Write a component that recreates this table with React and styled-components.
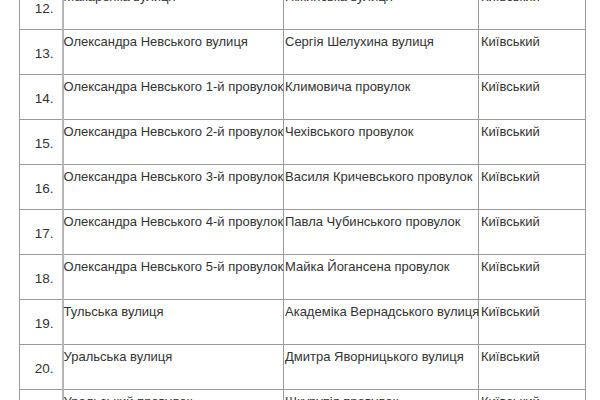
import styled, { createGlobalStyle } from 'styled-components'

const GlobalStyle = createGlobalStyle`
  html, body {
    margin: 0;
    padding: 0;
    background: #fff;
    overflow: hidden;
  }
`

const Page = styled.div`
  width: 600px;
  height: 400px;
  overflow: hidden;
  background: #fff;
`

const Scroller = styled.div`
  margin-top: -16px;
  padding-left: 19px;
`

const Table = styled.table`
  border-collapse: collapse;
  table-layout: fixed;
  width: 566px;
  font-family: "Liberation Sans", Arial, sans-serif;
  font-size: 13px;
  color: #333;
`

const Row = styled.tr`
  height: 45px;
`

const NumCell = styled.td`
  border: 1px solid #9a9a9a;
  border-right: 2px solid #b5b5b5;
  text-align: right;
  vertical-align: middle;
  padding: 3px 8px 0 0;
  box-sizing: border-box;
  font-size: 13.5px;
`

const Cell = styled.td`
  border: 1px solid #9a9a9a;
  vertical-align: top;
  padding: 4px 0 0 ${p => p.$pl}px;
  box-sizing: border-box;
  white-space: nowrap;
  line-height: 16px;
`

const rows = [
  ['12.', 'Макаренка вулиця', 'Ніжинська вулиця', 'Київський'],
  ['13.', 'Олександра Невського вулиця', 'Сергія Шелухина вулиця', 'Київський'],
  ['14.', 'Олександра Невського 1-й провулок', 'Климовича провулок', 'Київський'],
  ['15.', 'Олександра Невського 2-й провулок', 'Чехівського провулок', 'Київський'],
  ['16.', 'Олександра Невського 3-й провулок', 'Василя Кричевського провулок', 'Київський'],
  ['17.', 'Олександра Невського 4-й провулок', 'Павла Чубинського провулок', 'Київський'],
  ['18.', 'Олександра Невського 5-й провулок', 'Майка Йогансена провулок', 'Київський'],
  ['19.', 'Тульська вулиця', 'Академіка Вернадського вулиця', 'Київський'],
  ['20.', 'Уральська вулиця', 'Дмитра Яворницького вулиця', 'Київський'],
  ['21.', 'Уральський провулок', 'Шкурупія провулок', 'Київський'],
]

export default function App() {
  return (
    <Page>
      <GlobalStyle />
      <Scroller>
        <Table>
          <colgroup>
            <col style={{ width: 43 }} />
            <col style={{ width: 221 }} />
            <col style={{ width: 195 }} />
            <col style={{ width: 107 }} />
          </colgroup>
          <tbody>
            {rows.map(r => (
              <Row key={r[0]}>
                <NumCell>{r[0]}</NumCell>
                <Cell $pl={0}>{r[1]}</Cell>
                <Cell $pl={1}>{r[2]}</Cell>
                <Cell $pl={2}>{r[3]}</Cell>
              </Row>
            ))}
          </tbody>
        </Table>
      </Scroller>
    </Page>
  )
}
